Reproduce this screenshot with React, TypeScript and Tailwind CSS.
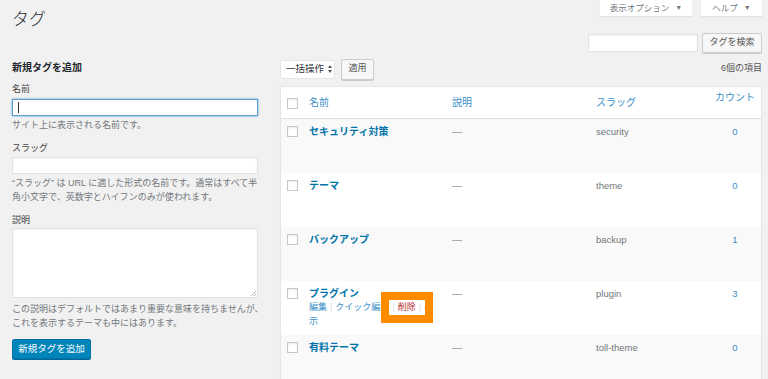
import React from 'react'

const rows = [
  { name: 'セキュリティ対策', slug: 'security', count: '0', alt: true },
  { name: 'テーマ', slug: 'theme', count: '0', alt: false },
  { name: 'バックアップ', slug: 'backup', count: '1', alt: true },
  { name: 'プラグイン', slug: 'plugin', count: '3', alt: false, actions: true },
  { name: '有料テーマ', slug: 'toll-theme', count: '0', alt: true },
]

function Checkbox() {
  return (
    <div className="w-[11px] h-[11px] bg-white border border-[#c5c8cb] shadow-[inset_0_1px_2px_rgba(0,0,0,0.08)]" />
  )
}

export default function App() {
  return (
    <div className="w-full h-[379px] overflow-hidden bg-[#f1f1f1] text-[#444] font-['Liberation_Sans','Noto_Sans_CJK_JP',sans-serif]">
      {/* top: title + screen tabs */}
      <div className="flex justify-between h-[34px] pl-[12px] pr-[6px]">
        <h1 className="pt-[11px] text-[17px] leading-[18px] font-light text-[#23282d]">タグ</h1>
        <div className="flex gap-[9px]">
          <div className="w-[92px] h-[16px] bg-white shadow-[0_1px_1px_rgba(0,0,0,0.06)] flex items-center justify-center text-[8.5px] text-[#72777c]">
            表示オプション <span className="ml-[6px] text-[7px]">▼</span>
          </div>
          <div className="w-[61px] h-[16px] bg-white shadow-[0_1px_1px_rgba(0,0,0,0.06)] flex items-center justify-center text-[8.5px] text-[#72777c]">
            ヘルプ <span className="ml-[6px] text-[7px]">▼</span>
          </div>
        </div>
      </div>

      {/* search */}
      <div className="flex justify-end items-center h-[18px] pr-[6px] gap-[4px]">
        <div className="w-[110px] h-[18px] bg-white border border-[#e2e2e2] shadow-[inset_0_1px_2px_rgba(0,0,0,0.05)]" />
        <div className="w-[60px] h-[20px] bg-[#f7f7f7] border border-[#cccccc] rounded-[2px] shadow-[0_1px_0_#ccc] flex items-center justify-center text-[9px] text-[#555]">
          タグを検索
        </div>
      </div>

      <div className="flex mt-[7px]">
        {/* left form */}
        <div className="w-[246px] ml-[12px] shrink-0">
          <h2 className="text-[10px] leading-[18px] font-bold text-[#23282d]">新規タグを追加</h2>
          <div className="mt-[6px] text-[9px] leading-[13px] text-[#444]">名前</div>
          <div className="mt-[3px] h-[17px] bg-white border border-[#5b9dd9] shadow-[0_0_2px_rgba(30,140,190,0.8)] flex items-center pl-[5px]">
            <div className="w-px h-[11px] bg-[#333]" />
          </div>
          <div className="mt-[3px] text-[9px] leading-[13px] text-[#72777c]">サイト上に表示される名前です。</div>
          <div className="mt-[10px] text-[9px] leading-[13px] text-[#444]">スラッグ</div>
          <div className="mt-[2px] h-[17px] bg-white border border-[#e2e2e2] shadow-[inset_0_1px_2px_rgba(0,0,0,0.05)]" />
          <div className="mt-[3px] text-[9px] leading-[13.5px] text-[#72777c] whitespace-nowrap">
            “スラッグ” は URL に適した形式の名前です。通常はすべて半
            <br />
            角小文字で、英数字とハイフンのみが使われます。
          </div>
          <div className="mt-[10px] text-[9px] leading-[13px] text-[#444]">説明</div>
          <div className="relative mt-[1px] h-[70px] bg-white border border-[#e2e2e2] shadow-[inset_0_1px_2px_rgba(0,0,0,0.05)]">
            <svg className="absolute right-[1px] bottom-[1px]" width="6" height="6" viewBox="0 0 6 6">
              <path d="M6 1L1 6M6 4L4 6" stroke="#999" strokeWidth="0.8" />
            </svg>
          </div>
          <div className="mt-[5px] text-[9px] leading-[13.5px] text-[#72777c] whitespace-nowrap">
            この説明はデフォルトではあまり重要な意味を持ちませんが、
            <br />
            これを表示するテーマも中にはあります。
          </div>
          <div className="mt-[9px] w-[79px] h-[20px] bg-[#0085ba] border border-[#0073aa] rounded-[2px] shadow-[0_1px_0_#006799] flex items-center justify-center text-[9.5px] text-white">
            新規タグを追加
          </div>
        </div>

        {/* right list */}
        <div className="w-[482px] ml-[22px] shrink-0">
          <div className="flex items-center h-[20px]">
            <div className="w-[55px] h-[19px] bg-white border border-[#e5e5e5] rounded-[2px] flex items-center pl-[5px] text-[9.5px] text-[#32373c]">
              一括操作
              <svg className="ml-[4px]" width="4" height="8" viewBox="0 0 4 8">
                <path d="M0 3L2 0L4 3Z M0 5L2 8L4 5Z" fill="#555" />
              </svg>
            </div>
            <div className="ml-[6px] w-[33px] h-[21px] bg-[#f7f7f7] border border-[#cccccc] rounded-[2px] shadow-[0_1px_0_#ccc] flex items-center justify-center text-[9px] text-[#555]">
              適用
            </div>
            <div className="ml-auto text-[9px] text-[#555]">6個の項目</div>
          </div>

          <div className="mt-[7px] bg-white border border-[#e5e5e5] shadow-[0_1px_1px_rgba(0,0,0,0.04)]">
            {/* header */}
            <div className="grid grid-cols-[20px_144px_144px_120px_1fr] h-[32px] border-b border-[#e1e1e1] text-[10px] text-[#3b8fc8]">
              <div className="pl-[6px] pt-[11px]">
                <Checkbox />
              </div>
              <div className="pl-[8px] pt-[9px] leading-[13px]">名前</div>
              <div className="pl-[7px] pt-[9px] leading-[13px]">説明</div>
              <div className="pl-[7px] pt-[9px] leading-[13px]">スラッグ</div>
              <div className="pt-[4px] leading-[13px] text-center">カウント</div>
            </div>

            {rows.map((r) => (
              <div
                key={r.slug}
                className={`relative grid grid-cols-[20px_144px_144px_120px_1fr] h-[54px] ${r.alt ? 'bg-[#f9f9f9]' : 'bg-white'}`}
              >
                <div className="pl-[6px] pt-[7px]">
                  <Checkbox />
                </div>
                <div className="pl-[8px] pt-[6px]">
                  <div className="text-[10px] leading-[13px] font-bold text-[#0073aa]">{r.name}</div>
                  {r.actions && (
                    <div className="mt-[1px] text-[9px] leading-[13.5px] text-[#3b8fc8] whitespace-nowrap">
                      編集<span className="text-[#ddd] mx-[3px]">|</span>クイック編集
                      <span className="text-[#ddd] mx-[3px]">|</span>
                      <span className="text-[#b32d2e]">削除</span>
                      <span className="text-[#ddd] mx-[3px]">|</span>表
                      <br />示
                    </div>
                  )}
                </div>
                <div className="pl-[7px] pt-[6px] text-[10px] leading-[13px] text-[#999]">—</div>
                <div className="pl-[7px] pt-[6px] text-[9.5px] leading-[13px] text-[#72777c]">{r.slug}</div>
                <div className="pt-[6px] text-[9.5px] leading-[13px] text-center text-[#3b8fc8]">{r.count}</div>
                {r.actions && (
                  <div className="absolute left-[100px] top-[11px] w-[52px] h-[31px] border-[8px] border-[#ff8c00]" />
                )}
              </div>
            ))}
          </div>
        </div>
      </div>
    </div>
  )
}
